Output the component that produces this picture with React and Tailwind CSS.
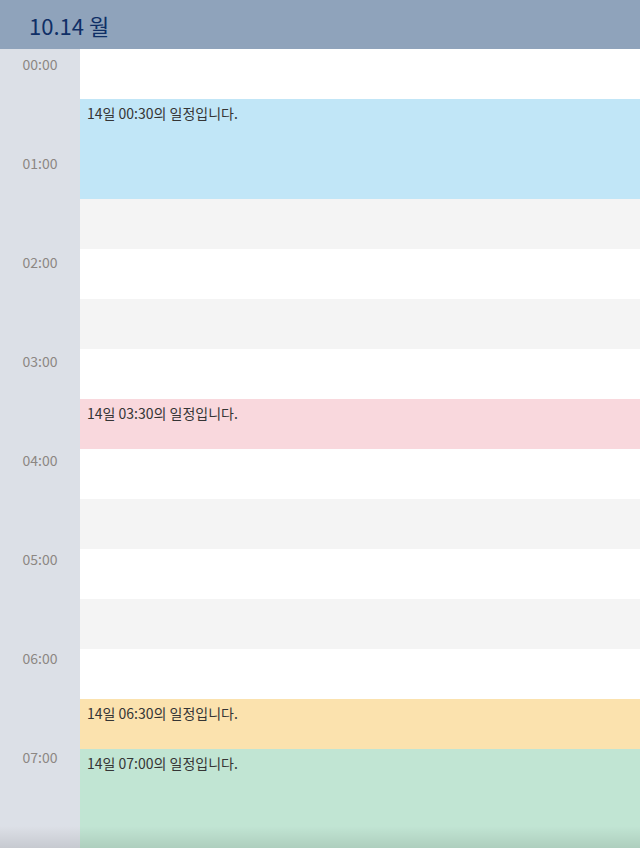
const rows = [
  { bg: 'bg-white' },
  { bg: 'bg-[#c1e6f7]', h: 'h-[100px]', text: '14일 00:30의 일정입니다.' },
  { bg: 'bg-[#f4f4f4]' },
  { bg: 'bg-white' },
  { bg: 'bg-[#f4f4f4]' },
  { bg: 'bg-white' },
  { bg: 'bg-[#f9d8dd]', text: '14일 03:30의 일정입니다.' },
  { bg: 'bg-white' },
  { bg: 'bg-[#f4f4f4]' },
  { bg: 'bg-white' },
  { bg: 'bg-[#f4f4f4]' },
  { bg: 'bg-white' },
  { bg: 'bg-[#fbe2ae]', text: '14일 06:30의 일정입니다.' },
  { bg: 'bg-[#c1e5d3]', h: 'h-[100px]', text: '14일 07:00의 일정입니다.' },
];

const hours = ['00:00', '01:00', '02:00', '03:00', '04:00', '05:00', '06:00', '07:00'];

export default function App() {
  return (
    <div
      className="relative h-[848px] w-[640px] overflow-hidden flex flex-col bg-white"
      style={{ fontFamily: '"Noto Sans CJK KR", "Noto Sans", sans-serif' }}
    >
      <header className="h-[49px] shrink-0 bg-[#8fa3bb] flex items-center px-[29px]">
        <h1 className="text-[22px] text-[#0f2f66] leading-none">10.14 월</h1>
      </header>

      <div className="flex flex-1 overflow-hidden">
        <div className="w-[80px] shrink-0 bg-[#dce0e7]">
          {hours.map((h) => (
            <div key={h} className="h-[99px] pt-[6px] text-center text-[14px] leading-[18px] text-[#8c8783]">
              {h}
            </div>
          ))}
        </div>

        <div className="flex-1 flex flex-col">
          {rows.map((r, i) => (
            <div key={i} className={`${r.h || 'h-[50px]'} ${r.bg} shrink-0 px-[7px] pt-[5px]`}>
              {r.text && (
                <p className="text-[14px] leading-[18px] text-[#353535]">{r.text}</p>
              )}
            </div>
          ))}
        </div>
      </div>

      <div className="pointer-events-none absolute bottom-0 left-0 right-0 h-[22px] bg-gradient-to-b from-transparent to-black/10" />
    </div>
  );
}
